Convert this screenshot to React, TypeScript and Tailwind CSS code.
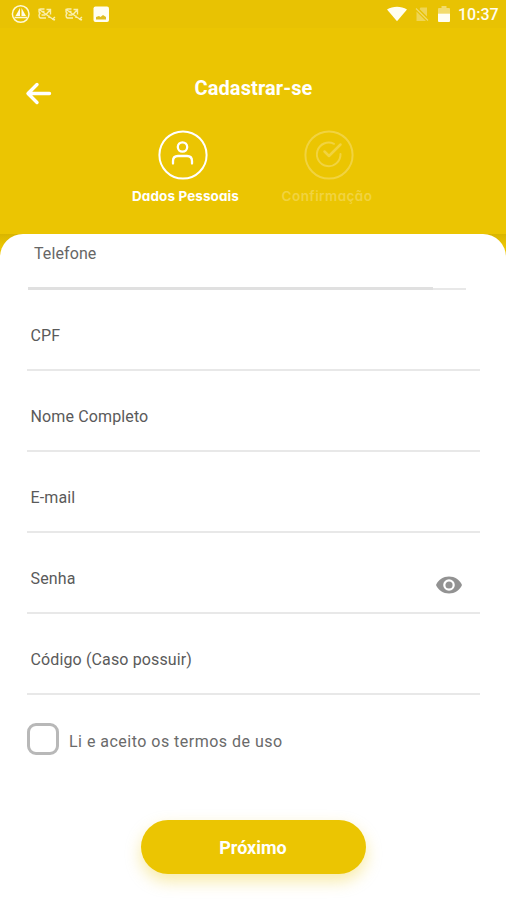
import React from "react";

function BlockedKey() {
  return (
    <svg width="20" height="16" viewBox="0 0 20 16" fill="none" stroke="#fffbd8" strokeWidth="1.4" opacity=".8">
      <path d="M1.500 3 17 14M7.500 3H3.500Q2 3 2 5t1.500 2Q2 7.500 2 9.500T3.500 12H9M4.500 5.500h3M4.500 9h4M9.500 3.500H13.500v5M13 4l-4 4.500M12 12V9.500M18 11l-3 2.500M18 14l-2-1" />
    </svg>
  );
}

function StatusBar() {
  return (
    <div className="flex h-7 items-center justify-between bg-[#e8c203] pl-[11px] pr-2">
      <div className="flex items-center">
        <svg width="20" height="20" viewBox="0 0 20 20" fill="none" stroke="#fff9d5">
          <circle cx="9.700" cy="10" r="8.300" strokeWidth="1.500" />
          <path d="M9 4 4.500 12H9zM10.500 4v8h4.500z" fill="#fffce8" stroke="none" />
          <path d="M3.500 13.500h12.500" strokeWidth="1.500" />
        </svg>
        <div className="ml-[6px] flex gap-[7px]">
          <BlockedKey />
          <BlockedKey />
        </div>
        <svg className="ml-[9px]" width="17" height="17" viewBox="0 0 17 17">
          <rect x=".5" y=".5" width="15.500" height="15.500" rx="2" fill="#fffef2" />
          <path d="M3 13.500v-2.500l3-1 1.500 1 2.500-2 3 2v2.500z" fill="#e0be20" />
        </svg>
      </div>
      <div className="flex items-center">
        <svg width="20" height="16" viewBox="0 0 20 16">
          <path d="M0 3.500C6-.3 14-.3 20 3.500L10 15.300z" fill="#fffef0" />
        </svg>
        <svg className="ml-[8px]" width="14" height="16" viewBox="0 0 14 16">
          <path d="M5.500 1.500H12v9L4.500 3zM1.500 5.500 11 15H1.500z" fill="#fff" opacity=".32" />
          <path d="m1 2.500 12 12" stroke="#fff" strokeWidth="1.300" opacity=".4" />
        </svg>
        <svg className="ml-[9px]" width="13" height="16" viewBox="0 0 13 16">
          <path d="M3.500 0h5v2H11q1 0 1 1v4.500H0V3q0-1 1-1h2.500z" fill="#fff" opacity=".42" />
          <path d="M0 7.500h12V15q0 1-1 1H1q-1 0-1-1z" fill="#fffef2" />
        </svg>
        <span className="ml-[7px] mt-px w-[40px] whitespace-nowrap text-[16px] font-medium leading-5 text-[#fffdf0]">10:37</span>
      </div>
    </div>
  );
}

function Step({ label, active, children }: { label: string; active?: boolean; children: React.ReactNode }) {
  return (
    <div className={`flex w-[146px] flex-col items-center ${active ? "text-white" : "text-[#f1d340]"}`}>
      <svg width="50" height="50" viewBox="0 0 50 50" fill="none" stroke="currentColor" strokeLinecap="round" strokeLinejoin="round">
        <circle cx="25" cy="25" r="23.600" strokeWidth="2" />
        {children}
      </svg>
      <span className={`mt-[7px] whitespace-nowrap font-[Inter,sans-serif] text-[13.5px] leading-[18px] [font-feature-settings:'cv11','ss03'] ${active ? "pl-[5px] font-bold tracking-[0.1px]" : "pr-[4px] font-semibold tracking-[0.45px]"}`}>
        {label}
      </span>
    </div>
  );
}

function EyeIcon() {
  return (
    <svg width="26" height="18" viewBox="0 0 26 18">
      <path d="M0 9C2.300 3.600 7.200.5 13 .5S23.700 3.600 26 9c-2.300 5.400-7.200 8.500-13 8.500S2.300 14.400 0 9z" fill="#929292" />
      <circle cx="13" cy="9" r="4.700" fill="#929292" stroke="#fff" strokeWidth="2.200" />
    </svg>
  );
}

function Field({ label, icon }: { label: string; icon?: React.ReactNode }) {
  return (
    <label className="flex h-[81px] items-start justify-between border-b-2 border-[#e8e8e8] pl-[3.5px] pr-[18px] pt-[34px]">
      <span className="text-[16px] leading-6 tracking-[0.13px] text-[#5a5a5a]">{label}</span>
      {icon && <span className="mt-[9px]">{icon}</span>}
    </label>
  );
}

export default function App() {
  return (
    <div className="flex h-[900px] w-[506px] flex-col overflow-hidden bg-[#ebc502] font-[Roboto,sans-serif]">
      <StatusBar />
      <header className="h-[206px] shrink-0">
        <div className="grid h-[102px] grid-cols-[75px_1fr_75px] pt-[48px]">
          <svg className="ml-[25px] mt-[6px]" width="28" height="24" viewBox="0 0 28 24" fill="none" stroke="#fff" strokeWidth="3.400" strokeLinecap="round" strokeLinejoin="round">
            <path d="M24.500 11.500H3.500M12 2.500l-9 9 9 9" />
          </svg>
          <h1 className="pl-px text-center text-[20px] font-bold leading-6 tracking-[0.1px] text-white">Cadastrar-se</h1>
        </div>
        <div className="flex justify-center pl-[6px]">
          <Step label="Dados Pessoais" active>
            <circle cx="24.500" cy="17" r="4.700" strokeWidth="2.300" />
            <path d="M15 33.500v-2.500q0-5 5-5h9q5 0 5 5v2.500" strokeWidth="2.300" />
          </Step>
          <Step label="Confirmação">
            <path d="M30 13.800A11.800 11.800 0 1 0 36.500 24" strokeWidth="2" />
            <path d="m20.500 21.500 4.500 4.500L36.500 14.500" strokeWidth="2.500" />
          </Step>
        </div>
      </header>
      <main className="flex-1 bg-[linear-gradient(#d9b500,#ebc502_12px)]">
        <div className="h-full rounded-t-[23px] bg-white px-[27px]">
          <div className="ml-px mr-[13px] flex h-[56px] flex-col justify-between">
            <span className="pl-[6px] pt-[8px] text-[16px] leading-6 tracking-[0.1px] text-[#666]">Telefone</span>
            <div className="flex items-end">
              <div className="h-[3px] w-[405px] bg-[#e0e0e0]" />
              <div className="h-[2px] flex-1 bg-[#e8e8e8]" />
            </div>
          </div>
          <div className="mr-[-1px]">
            <Field label="CPF" />
            <Field label="Nome Completo" />
            <Field label="E-mail" />
            <Field label="Senha" icon={<EyeIcon />} />
            <Field label="Código (Caso possuir)" />
          </div>
          <label className="mt-[28px] flex h-8 items-center">
            <span className="h-8 w-8 rounded-[9px] border-[3px] border-[#b8b8b8]" />
            <span className="ml-[10px] mt-[5px] text-[16px] leading-6 tracking-[0.48px] text-[#6a6a6a]">Li e aceito os termos de uso</span>
          </label>
          <button className="mx-auto mt-[65px] flex h-[54px] w-[225px] items-center justify-center rounded-full bg-[#ebc502] text-[18px] font-bold text-white shadow-[0_7px_16px_rgba(235,197,2,0.35)]">
            Próximo
          </button>
        </div>
      </main>
    </div>
  );
}
